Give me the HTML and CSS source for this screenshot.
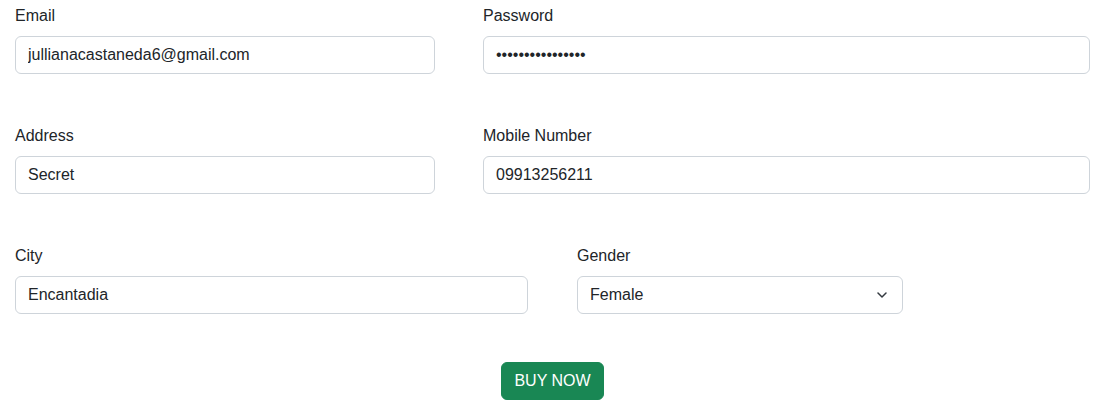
FILE: index.html
```html
<!DOCTYPE html>
<html lang="en">
<head>
<meta charset="utf-8">
<title>Checkout</title>
<link rel="stylesheet" href="styles.css">
</head>
<body>
<form class="form">
  <div class="row row-a">
    <div class="field">
      <label class="label" for="email">Email</label>
      <input class="control" id="email" type="text" value="jullianacastaneda6@gmail.com">
    </div>
    <div class="field">
      <label class="label" for="pw">Password</label>
      <input class="control" id="pw" type="password" value="jullianacastaned">
    </div>
  </div>
  <div class="row row-a">
    <div class="field">
      <label class="label" for="addr">Address</label>
      <input class="control" id="addr" type="text" value="Secret">
    </div>
    <div class="field">
      <label class="label" for="mob">Mobile Number</label>
      <input class="control" id="mob" type="text" value="09913256211">
    </div>
  </div>
  <div class="row row-b">
    <div class="field">
      <label class="label" for="city">City</label>
      <input class="control" id="city" type="text" value="Encantadia">
    </div>
    <div class="field">
      <label class="label" for="gender">Gender</label>
      <div class="select">
        <span class="select-value">Female</span>
        <svg class="chev" width="10" height="6" viewBox="0 0 10 6"><path d="M1 1l4 4 4-4" fill="none" stroke="#343a40" stroke-width="1.5" stroke-linecap="round" stroke-linejoin="round"/></svg>
      </div>
    </div>
  </div>
  <div class="actions">
    <button type="button" class="btn">BUY NOW</button>
  </div>
</form>
</body>
</html>
```
FILE: styles.css
```css
* { box-sizing: border-box; }
html, body { margin: 0; background: #fff; }
body {
  font-family: "Liberation Sans", Arial, sans-serif;
  font-size: 16px;
  line-height: 1.5;
  color: #212529;
}
.form {
  width: 1075px;
  margin-left: 15px;
  padding-top: 4px;
}
.row {
  display: grid;
  column-gap: 48px;
  margin-bottom: 50px;
}
.row-a { grid-template-columns: 420px 607px; }
.row-b { grid-template-columns: 513px 326px; column-gap: 49px; margin-bottom: 48px; }
.label {
  display: block;
  height: 24px;
  margin-bottom: 8px;
}
.control, .select {
  display: block;
  width: 100%;
  height: 38px;
  padding: 6px 12px;
  font: inherit;
  color: #212529;
  background: #fff;
  border: 1px solid #ced4da;
  border-radius: 6px;
  outline: none;
}
.select {
  display: flex;
  align-items: center;
  justify-content: space-between;
}
.chev { width: 10px; height: 6px; margin-right: 3px; }
.actions { display: flex; justify-content: center; }
.btn {
  height: 38px;
  padding: 6px 12px;
  font: inherit;
  color: #fff;
  background: #198754;
  border: 1px solid #198754;
  border-radius: 6px;
}
```
